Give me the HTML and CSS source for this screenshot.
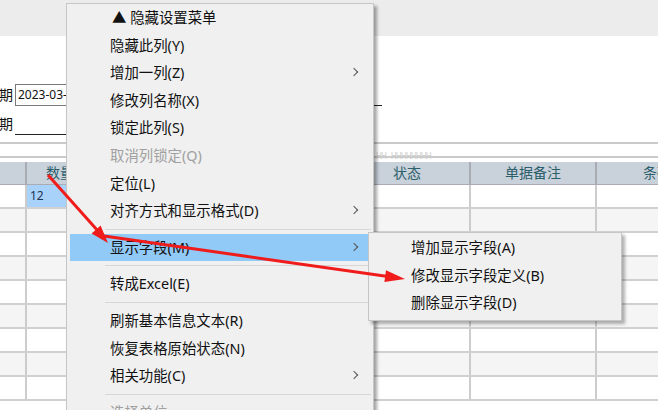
FILE: index.html
```html
<!DOCTYPE html>
<html lang="zh-CN">
<head>
  <meta charset="UTF-8" />
  <title>显示字段菜单</title>
  <link rel="stylesheet" href="styles.css">
</head>
<body>
  <div class="window">
    <div class="toolbar"></div>
    <div class="form">
      <div class="form-row">
        <span class="label">期</span>
        <span class="date-input">2023-03-01</span>
        <span class="line"></span>
      </div>
      <div class="form-row">
        <span class="label">期</span>
        <span class="blank"></span>
      </div>
    </div>
    <div class="ruler"><span class="ticks">HH&nbsp;&nbsp;&nbsp;HHHHHHHH</span></div>
    <table class="grid">
      <colgroup>
        <col style="width:26px"><col style="width:68px"><col style="width:120px"><col style="width:130px">
        <col style="width:126px"><col style="width:126px"><col style="width:122px">
      </colgroup>
      <thead>
        <tr><th></th><th>数量</th><th>单价</th><th>金额</th><th>状态</th><th>单据备注</th><th>条码</th></tr>
      </thead>
      <tbody>
        <tr><td></td><td class="selected">12</td><td></td><td></td><td></td><td></td><td></td></tr>
        <tr><td></td><td></td><td></td><td></td><td></td><td></td><td></td></tr>
        <tr><td></td><td></td><td></td><td></td><td></td><td></td><td></td></tr>
        <tr><td></td><td></td><td></td><td></td><td></td><td></td><td></td></tr>
        <tr><td></td><td></td><td></td><td></td><td></td><td></td><td></td></tr>
        <tr><td></td><td></td><td></td><td></td><td></td><td></td><td></td></tr>
        <tr><td></td><td></td><td></td><td></td><td></td><td></td><td></td></tr>
        <tr><td></td><td></td><td></td><td></td><td></td><td></td><td></td></tr>
        <tr><td></td><td></td><td></td><td></td><td></td><td></td><td></td></tr>
      </tbody>
    </table>
  </div>

  <!-- context menu -->
  <div class="menu">
    <div class="item title">▲ 隐藏设置菜单</div>
    <div class="item">隐藏此列(Y)</div>
    <div class="item has-sub">增加一列(Z)</div>
    <div class="item">修改列名称(X)</div>
    <div class="item">锁定此列(S)</div>
    <div class="item disabled">取消列锁定(Q)</div>
    <div class="item">定位(L)</div>
    <div class="item has-sub">对齐方式和显示格式(D)</div>
    <div class="sep"></div>
    <div class="item has-sub active">显示字段(M)</div>
    <div class="sep"></div>
    <div class="item">转成Excel(E)</div>
    <div class="sep"></div>
    <div class="item">刷新基本信息文本(R)</div>
    <div class="item">恢复表格原始状态(N)</div>
    <div class="item has-sub">相关功能(C)</div>
    <div class="sep"></div>
    <div class="item disabled">选择单位</div>
  </div>

  <div class="submenu">
    <div class="item">增加显示字段(A)</div>
    <div class="item">修改显示字段定义(B)</div>
    <div class="item">删除显示字段(D)</div>
  </div>

  <!-- annotation arrows -->
  <svg class="arrows" width="658" height="410" viewBox="0 0 658 410">
    <line x1="48" y1="175" x2="98" y2="231" stroke="#f01c1c" stroke-width="3"/>
    <polygon points="108,243 91.6,233.5 100.6,225.5" fill="#f01c1c"/>
    <line x1="104" y1="236" x2="388" y2="276.5" stroke="#f01c1c" stroke-width="3"/>
    <polygon points="405,279 384.4,282.1 386,270.3" fill="#f01c1c"/>
  </svg>
</body>
</html>
```

FILE: styles.css
```css
body {
  margin: 0;
  width: 658px;
  height: 410px;
  overflow: hidden;
  position: relative;
  background: #ffffff;
  font-family: "Noto Sans", "Noto Sans CJK SC", sans-serif;
  font-size: 14px;
  color: #111;
}
.window {
  width: 658px;
  height: 410px;
  overflow: hidden;
}
.toolbar {
  height: 36px;
  background: #ececec;
}
.form {
  height: 106px;
  box-sizing: border-box;
  padding-top: 48px;
}
.form-row {
  display: flex;
  align-items: flex-end;
  height: 22px;
  margin-bottom: 7px;
}
.label {
  width: 16px;
  line-height: 22px;
  margin-left: -1px;
}
.date-input {
  box-sizing: border-box;
  width: 80px;
  height: 22px;
  border: 1px solid #7a7a7a;
  font-size: 12px;
  line-height: 20px;
  padding-left: 2px;
  overflow: hidden;
  white-space: nowrap;
}
.line {
  width: 287px;
  height: 4px;
  border-bottom: 1px solid #222;
}
.blank {
  width: 120px;
  height: 2px;
  border-bottom: 1px solid #222;
}
.ruler {
  height: 12px;
  border-top: 2px solid #cacaca;
  border-bottom: 2px solid #cacaca;
  margin-bottom: 4px;
  padding-left: 376px;
}
.ticks {
  font-family: "DejaVu Sans", sans-serif;
  font-size: 8px;
  line-height: 12px;
  color: #cfcfcf;
  letter-spacing: -1px;
}
.grid {
  border-collapse: collapse;
  table-layout: fixed;
  width: 718px;
}
.grid th {
  height: 22px;
  box-sizing: border-box;
  padding: 0;
  background: #c9d1da;
  border-right: 2px solid #a9adb3;
  border-bottom: 1px solid #a9adb3;
  color: #2c5f6c;
  font-weight: normal;
  font-size: 14px;
  line-height: 20px;
  text-align: center;
  white-space: nowrap;
  overflow: hidden;
}
.grid td {
  height: 24px;
  box-sizing: border-box;
  padding: 0 3px;
  border-right: 2px solid #cccccc;
  border-bottom: 2px solid #d0d0d0;
  font-size: 12px;
  color: #1c3553;
}
.grid tbody tr:nth-child(even) td {
  background: #f5f5f5;
}
.grid td.selected {
  background: #a9d2fb;
}
.menu {
  position: absolute;
  left: 66px;
  top: 3px;
  width: 306px;
  height: 406px;
  overflow: hidden;
  background: #f0f0f0;
  border: 1px solid #c6c6c6;
  border-bottom: none;
  box-shadow: 3px 3px 3px rgba(0, 0, 0, 0.35);
}
.submenu {
  position: absolute;
  left: 368px;
  top: 232px;
  width: 252px;
  height: 86px;
  padding-top: 1px;
  background: #f0f0f0;
  border: 1px solid #c6c6c6;
  box-shadow: 3px 3px 3px rgba(0, 0, 0, 0.3);
}
.item {
  position: relative;
  height: 27.6px;
  line-height: 27.6px;
  margin: 0 3px;
  padding-left: 40px;
  white-space: nowrap;
  color: #111;
  font-size: 14.4px;
}
.submenu .item {
  padding-left: 39px;
}
.item.title {
  padding-left: 42px;
}
.item.disabled {
  color: #a0a0a0;
}
.item.active {
  background: #91c9f7;
}
.item.has-sub::after {
  content: "";
  position: absolute;
  right: 13px;
  top: 10px;
  width: 5px;
  height: 5px;
  border-top: 1.5px solid #555;
  border-right: 1.5px solid #555;
  transform: rotate(45deg);
}
.sep {
  height: 9px;
  margin-left: 38px;
  margin-right: 2px;
  background: linear-gradient(#d6d6d6, #d6d6d6) center / 100% 1px no-repeat;
}
.arrows {
  position: absolute;
  left: 0;
  top: 0;
}
```
